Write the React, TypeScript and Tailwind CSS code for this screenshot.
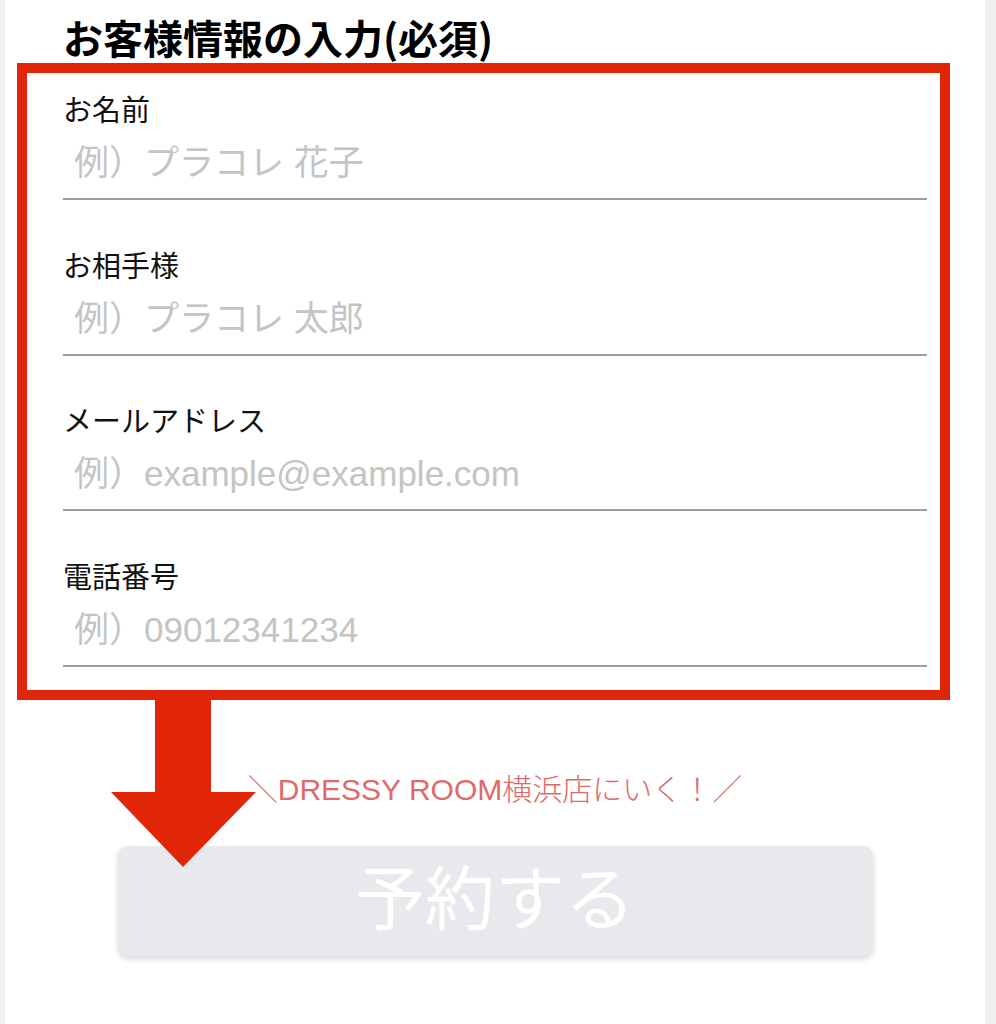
import React from 'react';

const fields = [
  { label: 'お名前', placeholder: '例）プラコレ 花子', type: 'text' },
  { label: 'お相手様', placeholder: '例）プラコレ 太郎', type: 'text' },
  { label: 'メールアドレス', placeholder: '例）example@example.com', type: 'email' },
  { label: '電話番号', placeholder: '例）09012341234', type: 'tel' },
];

const font = "font-['Liberation_Sans','Noto_Sans_CJK_JP',sans-serif]";

const App = () => {
  return (
    <div className={`min-h-screen bg-[#f0f0f0] ${font}`}>
      <div className="relative ml-[5px] mr-[11px] min-h-screen bg-white pt-[14px]">
        <h2 className="ml-[58px] font-['Noto_Sans_CJK_JP',sans-serif] text-[40px] leading-[47px] font-bold text-black">
          お客様情報の入力(必須)
        </h2>

        {/* 入力フォーム（赤枠） */}
        <div className="mt-[2px] ml-[12px] w-[933px] border-[10px] border-[#e12508] pl-[36px] pr-[13px] pt-[18px] pb-[23px]">
          <div className="flex flex-col gap-[46.5px]">
            {fields.map((f) => (
              <div key={f.label}>
                <label className="block text-[29px] leading-[40px] text-[#111] mb-[9px]">
                  {f.label}
                </label>
                <input
                  type={f.type}
                  placeholder={f.placeholder}
                  className="block w-full h-[60px] pl-[11px] pb-[12px] border-b-2 border-[#9e9e9e] bg-transparent text-[35px] text-[#333] placeholder:text-[#c4c4c4] outline-none"
                />
              </div>
            ))}
          </div>
        </div>

        <p className="mt-[70px] text-center text-[30px] leading-[40px] text-[#e06a6a] font-light">
          ＼DRESSY ROOM横浜店にいく！／
        </p>

        <button
          disabled
          className="mt-[36px] mx-auto flex h-[110px] w-[755px] items-center justify-center rounded-[10px] bg-[#e8e9ec] text-[70px] leading-none text-white shadow-[0_3px_6px_rgba(0,0,0,0.16)]"
        >
          予約する
        </button>

        {/* 注目の矢印 */}
        <svg
          className="absolute left-[106px] top-[697px]"
          width="145"
          height="170"
          viewBox="0 0 145 170"
        >
          <polygon points="44,0 100,0 100,95 145,95 72,170 0,95 44,95" fill="#e12508" />
        </svg>
      </div>
    </div>
  );
};

export default App;
